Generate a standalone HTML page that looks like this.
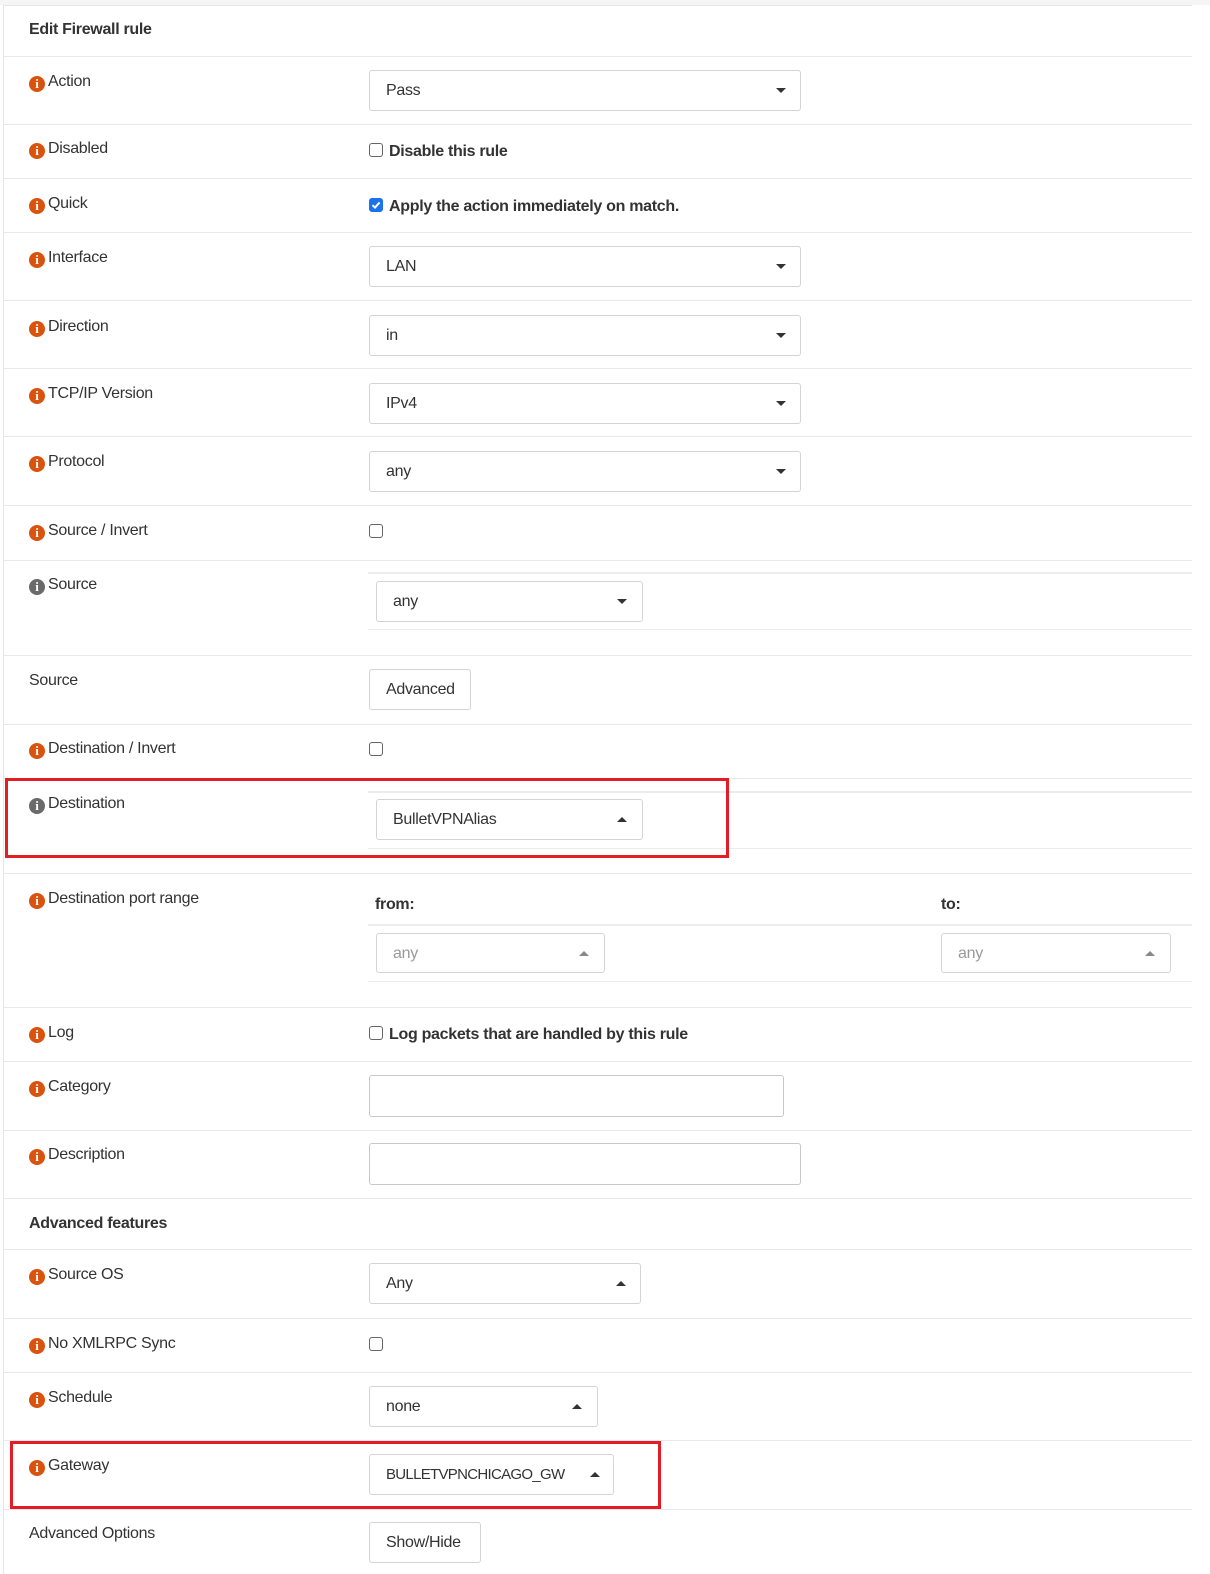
<!DOCTYPE html>
<html><head><meta charset="utf-8">
<style>
*{box-sizing:border-box;margin:0;padding:0}
html,body{width:1210px;height:1574px;overflow:hidden}
body{background:#fff;position:relative;font-family:"Liberation Sans",sans-serif;font-size:16px;color:#333;letter-spacing:-0.3px}
.top{position:absolute;left:0;top:0;width:1210px;height:5px;background:#f5f5f5}
.panel{position:absolute;left:3px;top:5px;width:1189px;height:1569px;border-left:1px solid #e6e6e6;border-top:1px solid #e6e6e6}
.hl{position:absolute;left:4px;width:1188px;height:1px;background:#e8e8e8}
.il{position:absolute;left:368px;width:824px;height:2px;background:#ececec}
.l{position:absolute;left:29px;line-height:20px;white-space:nowrap}
.i{display:inline-block;width:16px;height:16px;border-radius:50%;background:#d9530f;color:#fff;font-weight:bold;font-size:13px;line-height:16px;text-align:center;font-family:"Liberation Serif",serif;vertical-align:-2px;margin-right:3px;letter-spacing:0}
.i.g{background:#6a6a6a}
.b{font-weight:bold}
.s{position:absolute;border:1px solid #d4d4d4;border-radius:3px;background:#fff;padding-left:16px;line-height:39px;white-space:nowrap;overflow:hidden}
.s.f{color:#999}
.dn,.up{position:absolute;width:0;height:0;border-left:5px solid transparent;border-right:5px solid transparent;top:17px}
.dn{border-top:5px solid #333}
.up{border-bottom:5px solid #333}
.f .up{border-bottom-color:#888}
.cb{position:absolute;left:369px;width:14px;height:14px;border:1px solid #666;border-radius:3px;background:#fff}
.cb.on{background:#1a73e8;border-color:#1a73e8}
.ct{position:absolute;left:389px;line-height:20px;font-weight:bold;white-space:nowrap}
.red{position:absolute;border:3px solid #e31c25}
</style></head><body>
<div class="top"></div>
<div class="panel"></div>

<div class="hl" style="top:56px"></div>
<div class="hl" style="top:124px"></div>
<div class="hl" style="top:178px"></div>
<div class="hl" style="top:232px"></div>
<div class="hl" style="top:300px"></div>
<div class="hl" style="top:368px"></div>
<div class="hl" style="top:436px"></div>
<div class="hl" style="top:505px"></div>
<div class="hl" style="top:560px"></div>
<div class="hl" style="top:655px"></div>
<div class="hl" style="top:724px"></div>
<div class="hl" style="top:778px"></div>
<div class="hl" style="top:873px"></div>
<div class="hl" style="top:1007px"></div>
<div class="hl" style="top:1061px"></div>
<div class="hl" style="top:1130px"></div>
<div class="hl" style="top:1198px"></div>
<div class="hl" style="top:1249px"></div>
<div class="hl" style="top:1318px"></div>
<div class="hl" style="top:1372px"></div>
<div class="hl" style="top:1440px"></div>
<div class="hl" style="top:1509px"></div>

<div class="il" style="top:572px"></div>
<div class="il" style="top:629px;height:1px"></div>
<div class="il" style="top:791px"></div>
<div class="il" style="top:848px;height:1px"></div>
<div class="il" style="top:924px"></div>
<div class="il" style="top:981px;height:1px"></div>

<div class="l b" style="top:20px">Edit Firewall rule</div>
<div class="l" style="top:72px"><span class="i">i</span>Action</div>
<div class="l" style="top:139px"><span class="i">i</span>Disabled</div>
<div class="l" style="top:194px"><span class="i">i</span>Quick</div>
<div class="l" style="top:248px"><span class="i">i</span>Interface</div>
<div class="l" style="top:317px"><span class="i">i</span>Direction</div>
<div class="l" style="top:384px"><span class="i">i</span>TCP/IP Version</div>
<div class="l" style="top:452px"><span class="i">i</span>Protocol</div>
<div class="l" style="top:521px"><span class="i">i</span>Source / Invert</div>
<div class="l" style="top:575px"><span class="i g">i</span>Source</div>
<div class="l" style="top:671px">Source</div>
<div class="l" style="top:739px"><span class="i">i</span>Destination / Invert</div>
<div class="l" style="top:794px"><span class="i g">i</span>Destination</div>
<div class="l" style="top:889px"><span class="i">i</span>Destination port range</div>
<div class="l" style="top:1023px"><span class="i">i</span>Log</div>
<div class="l" style="top:1077px"><span class="i">i</span>Category</div>
<div class="l" style="top:1145px"><span class="i">i</span>Description</div>
<div class="l b" style="top:1214px">Advanced features</div>
<div class="l" style="top:1265px"><span class="i">i</span>Source OS</div>
<div class="l" style="top:1334px"><span class="i">i</span>No XMLRPC Sync</div>
<div class="l" style="top:1388px"><span class="i">i</span>Schedule</div>
<div class="l" style="top:1456px"><span class="i">i</span>Gateway</div>
<div class="l" style="top:1524px">Advanced Options</div>

<div class="s" style="left:369px;top:70px;width:432px;height:41px">Pass<span class="dn" style="left:406px"></span></div>
<div class="cb" style="top:143px"></div><div class="ct" style="top:142px">Disable this rule</div>
<div class="cb on" style="top:198px"><svg width="12" height="12" viewBox="0 0 12 12" style="position:absolute;left:0;top:0"><path d="M2.5 6.2 L5 8.6 L9.6 3.4" stroke="#fff" stroke-width="2" fill="none"/></svg></div><div class="ct" style="top:197px">Apply the action immediately on match.</div>
<div class="s" style="left:369px;top:246px;width:432px;height:41px">LAN<span class="dn" style="left:406px"></span></div>
<div class="s" style="left:369px;top:315px;width:432px;height:41px">in<span class="dn" style="left:406px"></span></div>
<div class="s" style="left:369px;top:383px;width:432px;height:41px">IPv4<span class="dn" style="left:406px"></span></div>
<div class="s" style="left:369px;top:451px;width:432px;height:41px">any<span class="dn" style="left:406px"></span></div>
<div class="cb" style="top:524px"></div>
<div class="s" style="left:376px;top:581px;width:267px;height:41px">any<span class="dn" style="left:240px"></span></div>
<div class="s" style="left:369px;top:669px;width:102px;height:41px">Advanced</div>
<div class="cb" style="top:742px"></div>
<div class="s" style="left:376px;top:799px;width:267px;height:41px">BulletVPNAlias<span class="up" style="left:240px"></span></div>
<div class="ct" style="left:375px;top:895px">from:</div>
<div class="ct" style="left:941px;top:895px">to:</div>
<div class="s f" style="left:376px;top:933px;width:229px;height:40px">any<span class="up" style="left:202px"></span></div>
<div class="s f" style="left:941px;top:933px;width:230px;height:40px">any<span class="up" style="left:203px"></span></div>
<div class="cb" style="top:1026px"></div><div class="ct" style="top:1025px">Log packets that are handled by this rule</div>
<div class="s" style="left:369px;top:1075px;width:415px;height:42px;border-color:#c8c8c8"></div>
<div class="s" style="left:369px;top:1143px;width:432px;height:42px;border-color:#c8c8c8"></div>
<div class="s" style="left:369px;top:1263px;width:272px;height:41px">Any<span class="up" style="left:246px"></span></div>
<div class="cb" style="top:1337px"></div>
<div class="s" style="left:369px;top:1386px;width:229px;height:41px">none<span class="up" style="left:202px"></span></div>
<div class="s" style="left:369px;top:1454px;width:245px;height:41px"><span style="font-size:15px;letter-spacing:-0.7px">BULLETVPNCHICAGO_GW</span><span class="up" style="left:220px"></span></div>
<div class="s" style="left:369px;top:1522px;width:112px;height:41px">Show/Hide</div>

<div class="red" style="left:5px;top:778px;width:724px;height:80px"></div>
<div class="red" style="left:10px;top:1441px;width:651px;height:68px"></div>
</body></html>
